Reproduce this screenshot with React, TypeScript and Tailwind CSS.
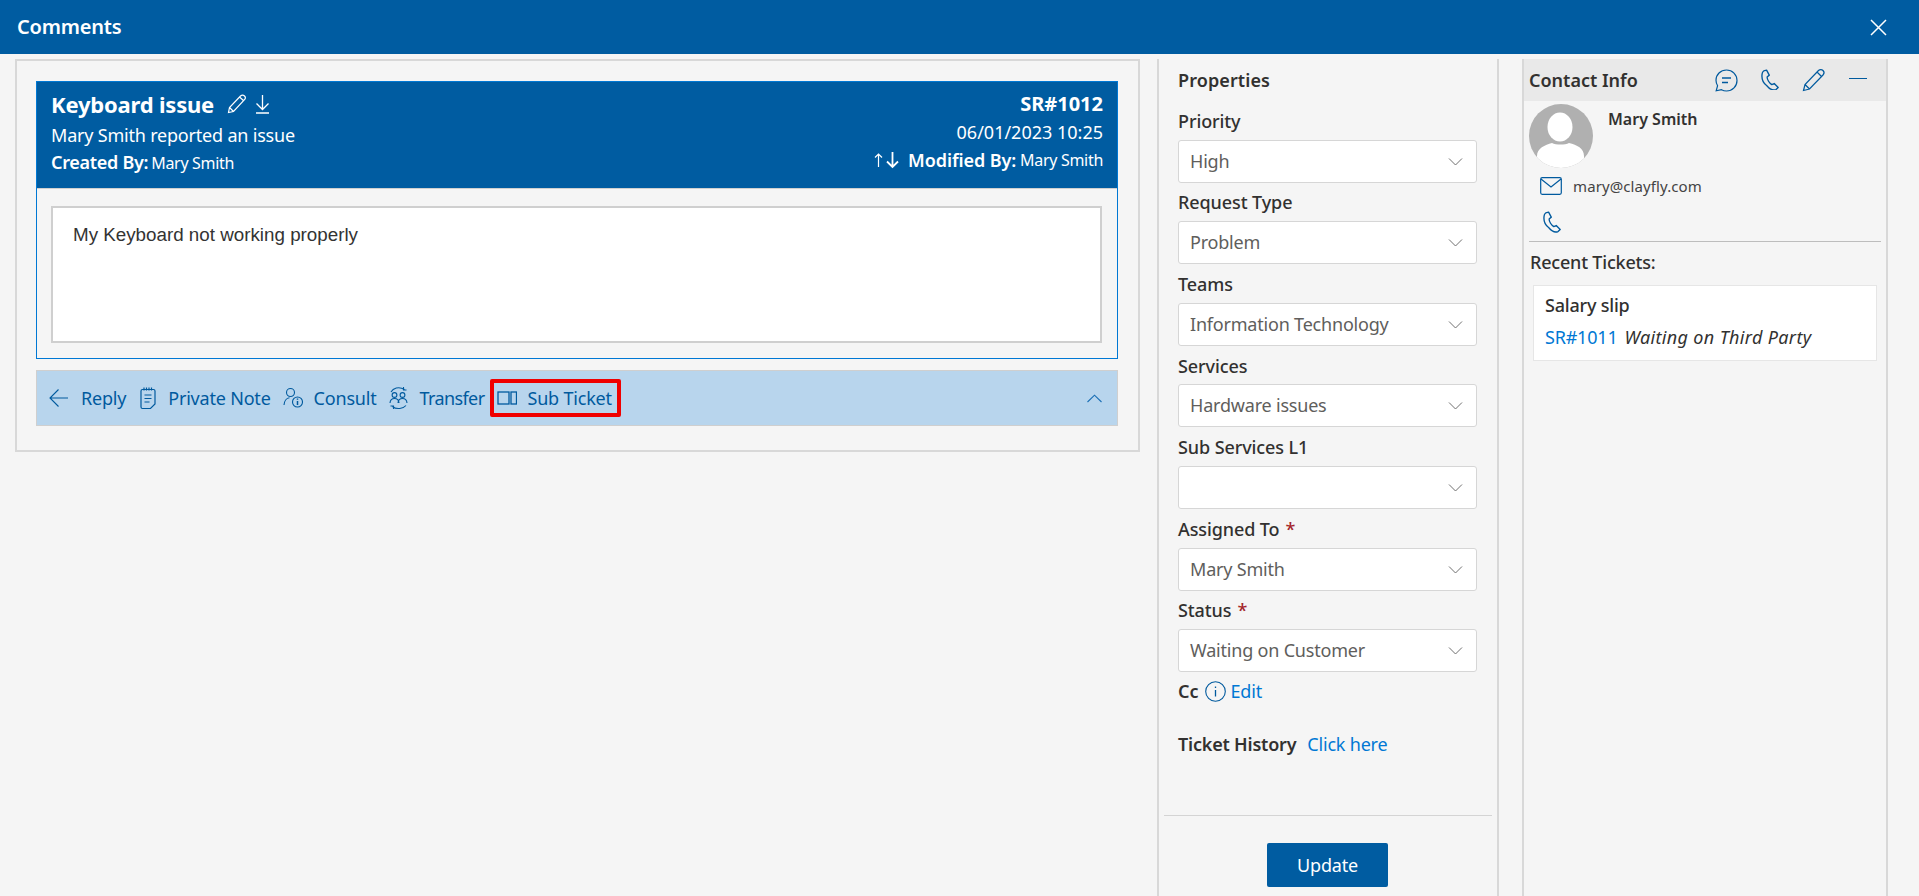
import React from "react";

const F = "font-['Noto_Sans',sans-serif]";

function Chevron({ className = "" }: { className?: string }) {
  return (
    <svg width="15" height="9" viewBox="0 0 15 9" fill="none" stroke="currentColor" strokeWidth="1" className={className}>
      <path d="M1 1.500l6.500 6.500 6.500-6.500" />
    </svg>
  );
}

function PhoneIcon({ size = 20, color = "#005a9e" }: { size?: number; color?: string }) {
  return (
    <svg width={size} height={size * 1.2} viewBox="0 0 20 24" fill="none" stroke={color} strokeWidth="1.500" strokeLinejoin="round">
      <path d="M3 2.200l3.200-1 3 5.600-2.400 2c0 3 2.400 7 5.200 8.600l2.700-1.300 4.400 4.400-2.400 2.300c-3 1.200-7-.3-10.200-4.200C2.400 15.600.6 10 1.200 5.600c.1-1.400.8-2.800 1.800-3.400z" />
    </svg>
  );
}

function Select({ label, value, required }: { label: string; value?: string; required?: boolean }) {
  return (
    <div className="flex flex-col">
      <div className="h-[38.6px] flex items-center text-[18px] font-medium text-[#323130] tracking-[-0.1px] pt-[2px]">
        {label}
        {required && <span className="ml-[6px] text-[#a4262c]">*</span>}
      </div>
      <div className="h-[43px] w-[299px] bg-white border border-[#d6d6d6] rounded-[3px] flex items-center justify-between pl-[11px] pr-[13px] text-[18px] text-[#605e5c] tracking-[-0.2px]">
        <span>{value}</span>
        <Chevron className="text-[#707070]" />
      </div>
    </div>
  );
}

function ToolItem({ icon, label, className = "" }: { icon: React.ReactNode; label: string; className?: string }) {
  return (
    <div className={`flex items-center gap-[11px] text-[18px] text-[#005a9e] tracking-[-0.2px] ${className}`}>
      {icon}
      <span>{label}</span>
    </div>
  );
}

export default function App() {
  return (
    <div className={`${F} w-[1919px] h-[896px] overflow-hidden bg-[#f5f5f5] flex flex-col`}>
      <header className="h-[54px] shrink-0 bg-[#005ca1] flex items-center justify-between pl-[17px] pr-[32px] text-white">
        <span className="text-[20px] font-semibold tracking-[-0.2px]">Comments</span>
        <svg width="17" height="17" viewBox="0 0 17 17" stroke="white" strokeWidth="1.500" fill="none">
          <path d="M1 1l15 15M16 1L1 16" />
        </svg>
      </header>

      <div className="flex flex-1 min-h-0 pl-[15px] pt-[5px]">
        {/* main */}
        <div className="w-[1125px] h-[393px] border-2 border-[#d8d8d8] pl-[19px] pr-[20px] pt-[20px]">
          <div className="border border-[#0078d4] h-[278px] flex flex-col">
            <div className="h-[106px] bg-[#005ca1] text-white flex justify-between pl-[14px] pr-[14px] pt-[8px]">
              <div className="flex flex-col">
                <div className="flex items-center h-[32px] mt-[-2px]">
                  <span className="text-[22px] font-bold tracking-[-0.2px]">Keyboard issue</span>
                  <svg width="20" height="20" viewBox="0 0 20 20" fill="none" stroke="white" strokeWidth="1.200" className="ml-[13px]">
                    <path d="M1.500 18.500l1-5L13.500 2c1.200-1.100 3-1 4 0s1 2.600 0 3.700L6.500 17.500l-5 1zM2.500 13.500l4 4M12.500 3l4.500 4" />
                  </svg>
                  <svg width="15" height="20" viewBox="0 0 15 20" fill="none" stroke="white" strokeWidth="1.300" className="ml-[8px]">
                    <path d="M7.500 1v14M1.500 9.500l6 6 6-6M1 19h13" />
                  </svg>
                </div>
                <div className="text-[18px] leading-[26px] tracking-[-0.2px] mt-[2px]">Mary Smith reported an issue</div>
                <div className="flex items-baseline leading-[30px] mt-[-1px]">
                  <span className="text-[18px] font-semibold tracking-[-0.3px]">Created By:</span>
                  <span className="text-[16px] ml-[3px] tracking-[-0.3px]">Mary Smith</span>
                </div>
              </div>
              <div className="flex flex-col items-end mt-[-1px]">
                <div className="text-[20px] font-bold leading-[30px]">SR#1012</div>
                <div className="text-[18px] leading-[26px]">06/01/2023 10:25</div>
                <div className="flex items-center h-[30px]">
                  <svg width="28" height="20" viewBox="0 0 28 20" fill="none" stroke="white">
                    <path d="M5.500 17V4M2 7.500l3.500-3.500L9 7.500" strokeWidth="1.200" />
                    <path d="M19.500 2v15M14 11.500l5.500 5.500 5.500-5.500" strokeWidth="1.800" />
                  </svg>
                  <span className="text-[18px] font-semibold ml-[7px] tracking-[-0.1px]">Modified By:</span>
                  <span className="text-[16px] ml-[4px] tracking-[-0.3px]">Mary Smith</span>
                </div>
              </div>
            </div>
            <div className="flex-1 border-t border-[#d0d0d0] pl-[14px] pr-[15px] pt-[17px]">
              <div className="h-[137px] bg-white border-2 border-[#cfcfcf] pl-[20px] pt-[16px] font-['Liberation_Sans',sans-serif] text-[18.8px] leading-[22px] text-[#333333]">
                My Keyboard not working properly
              </div>
            </div>
          </div>
          <div className="mt-[11px] h-[56px] bg-[#b8d5ed] border border-[#cfcfcf] flex items-center justify-between pl-[12px] pr-[15px]">
            <div className="flex items-center">
              <ToolItem
                className="gap-[12px]"
                icon={
                  <svg width="20" height="20" viewBox="0 0 20 20" fill="none" stroke="#005a9e" strokeWidth="1.100">
                    <path d="M19 10H1.500M9.500 1.500L1 10l8.500 8.500" />
                  </svg>
                }
                label="Reply"
              />
              <ToolItem
                className="ml-[14px] gap-[12px]"
                icon={
                  <svg width="16" height="24" viewBox="0 0 16 24" fill="none" stroke="#005a9e" strokeWidth="1.200">
                    <path d="M2.500 3.500h11a1.500 1.500 0 0 1 1.500 1.500v13l-4.500 4.500H2.500A1.500 1.500 0 0 1 1 21V5a1.500 1.500 0 0 1 1.500-1.500zM4 1.500v3M6.500 1.500v3M9 1.500v3M11.500 1.500v3M4.500 9h7M4.500 12.500h7M4.500 16h5" />
                  </svg>
                }
                label="Private Note"
              />
              <ToolItem
                className="ml-[12px]"
                icon={
                  <svg width="20" height="22" viewBox="0 0 20 22" fill="none" stroke="#005a9e" strokeWidth="1.100">
                    <circle cx="7.500" cy="5.500" r="4" />
                    <path d="M1 18c.2-4 2.500-7 5.500-7.300" />
                    <circle cx="14.500" cy="15" r="5" />
                    <path d="M14.500 14v4M14.500 11.600v1.200" strokeWidth="1.500" />
                  </svg>
                }
                label="Consult"
              />
              <ToolItem
                className="ml-[11px] gap-[10px] tracking-[-0.6px]"
                icon={
                  <svg width="21" height="24" viewBox="0 0 20 24" fill="none" stroke="#005a9e" strokeWidth="1.100">
                    <circle cx="6" cy="9" r="2.400" />
                    <circle cx="14" cy="9" r="2.400" />
                    <path d="M1.500 17c.2-2.600 2-4.500 4.500-4.500s4.300 1.900 4.500 4.500M9.500 17c.2-2.600 2-4.500 4.500-4.500s4.300 1.900 4.500 4.500" />
                    <path d="M2.500 6C4.500 2.500 10-.2 16 3.500M15 1v3h3M17.500 19.500C15 22.500 8 24 4 20.500M5 23v-3H2" />
                  </svg>
                }
                label="Transfer"
              />
              <div className="ml-[5px] w-[131px] h-[38px] border-4 border-[#f00000] rounded-[2px] flex items-center pl-[3px]">
                <ToolItem
                  className="gap-[10px]"
                  icon={
                    <svg width="20" height="16" viewBox="0 0 20 16" fill="none" stroke="#005a9e" strokeWidth="1.300">
                      <rect x="1" y="2" width="11" height="12" />
                      <rect x="14" y="2" width="5.500" height="12" />
                    </svg>
                  }
                  label="Sub Ticket"
                />
              </div>
            </div>
            <svg width="15" height="9" viewBox="0 0 15 9" fill="none" stroke="#1a6fb5" strokeWidth="1.100">
              <path d="M0.500 8L7.500 1.200 14.500 8" />
            </svg>
          </div>
        </div>

        {/* properties */}
        <div className="ml-[17px] w-[342px] h-[837px] border-x-2 border-[#d8d8d8] pl-[19px] flex flex-col relative">
          <div className="h-[42px] flex items-center text-[18px] font-semibold text-[#323130] tracking-[0.1px]">Properties</div>
          <div className="flex flex-col">
            <Select label="Priority" value="High" />
            <Select label="Request Type" value="Problem" />
            <Select label="Teams" value="Information Technology" />
            <Select label="Services" value="Hardware issues" />
            <Select label="Sub Services L1" />
            <Select label="Assigned To" value="Mary Smith" required />
            <Select label="Status" value="Waiting on Customer" required />
          </div>
          <div className="flex items-center h-[23px] mt-[8px] text-[18px]">
            <span className="font-semibold text-[#323130]">Cc</span>
            <svg width="21" height="21" viewBox="0 0 21 21" fill="none" stroke="#005a9e" strokeWidth="1.100" className="ml-[6px]">
              <circle cx="10.500" cy="10.500" r="9.800" />
              <path d="M10.500 9v6.500M10.500 5.500v1.500" strokeWidth="1.300" />
            </svg>
            <span className="ml-[5px] text-[#0078d4] tracking-[-0.2px]">Edit</span>
          </div>
          <div className="flex items-center h-[24px] mt-[29px] text-[18px]">
            <span className="font-semibold text-[#323130] tracking-[-0.2px]">Ticket History</span>
            <span className="ml-[11px] text-[#0078d4] tracking-[-0.2px]">Click here</span>
          </div>
          <div className="mt-[59px] ml-[-14px] w-[328px] h-px bg-[#d4d4d4]" />
          <button className="mt-[27px] ml-[89px] w-[121px] h-[44px] rounded-[2px] bg-[#005ca1] text-white text-[18px] tracking-[-0.2px]">Update</button>
        </div>

        {/* contact */}
        <div className="ml-[23px] w-[366px] h-[837px] border-x-2 border-[#d8d8d8] flex flex-col">
          <div className="h-[42px] bg-[#e9e9e9] flex items-center pl-[5px] shrink-0">
            <span className="text-[18px] font-semibold text-[#323130] w-[186px]">Contact Info</span>
            <svg width="23" height="23" viewBox="0 0 23 23" fill="none" stroke="#005a9e" strokeWidth="1.200">
              <path d="M11.500 1C5.500 1 1 5.500 1 11.200c0 2 .6 3.900 1.600 5.500L1.200 21.800l5.300-1.100a10.500 10.500 0 0 0 5 1.300c6 0 10.500-4.700 10.500-10.500S17.500 1 11.500 1z" />
              <path d="M7 9h9M7 13.500h6" strokeWidth="1.300" />
            </svg>
            <span className="ml-[23px] mt-[-1px]"><PhoneIcon size={18} /></span>
            <svg width="24" height="24" viewBox="0 0 24 24" fill="none" stroke="#005a9e" strokeWidth="1.200" className="ml-[23px]">
              <path d="M1.500 22.500l1.500-6L16.500 2.500c1.300-1.300 3.300-1.300 4.500 0s1.300 3.200 0 4.500L7.500 21l-6 1.500zM3 16.500l4.500 4.500M15 4l5 5" />
            </svg>
            <span className="ml-[23px] w-[18px] h-[1.500px] bg-[#005a9e] mt-[-3px]" />
          </div>
          <div className="flex pl-[5px] pt-[3px]">
            <div className="w-[64px] h-[64px] rounded-full bg-[#b0b0b0] overflow-hidden relative shrink-0">
              <svg width="64" height="64" viewBox="0 0 64 64" fill="white">
                <ellipse cx="31" cy="23" rx="12.500" ry="14.500" />
                <path d="M8 64V52c0-8 8-11 15-13 4 2 13 2 17 0 8 2 15 5 15 13v12z" />
              </svg>
            </div>
            <span className="ml-[15px] mt-[4px] text-[16px] leading-[22px] font-semibold text-[#323130]">Mary Smith</span>
          </div>
          <div className="flex items-center h-[20px] mt-[8px] pl-[16px]">
            <svg width="22" height="18" viewBox="0 0 22 18" fill="none" stroke="#005a9e" strokeWidth="1.200">
              <rect x="0.700" y="0.700" width="20.600" height="16.600" rx="1.500" />
              <path d="M1 2l10 8 10-8" />
            </svg>
            <span className="ml-[11px] text-[15px] text-[#444444] tracking-[0.1px]">mary@clayfly.com</span>
          </div>
          <div className="h-[22px] mt-[15px] pl-[19px]"><PhoneIcon size={18} /></div>
          <div className="mx-[5px] mt-[8px] h-px bg-[#bdbdbd]" />
          <div className="pl-[6px] mt-[8px] h-[24px] flex items-center text-[18px] font-medium text-[#323130] tracking-[-0.2px]">Recent Tickets:</div>
          <div className="ml-[9px] mt-[11px] w-[344px] h-[76px] bg-white border border-[#e6e6e6] pl-[11px] pt-[5px]">
            <div className="h-[28px] flex items-center text-[18px] font-medium text-[#323130] tracking-[-0.2px]">Salary slip</div>
            <div className="h-[28px] mt-[4px] flex items-center text-[18px] tracking-[-0.2px]">
              <span className="text-[#0078d4]">SR#1011</span>
              <span className="ml-[7px] italic text-[#323130] tracking-[0.35px]">Waiting on Third Party</span>
            </div>
          </div>
        </div>
      </div>
    </div>
  );
}
